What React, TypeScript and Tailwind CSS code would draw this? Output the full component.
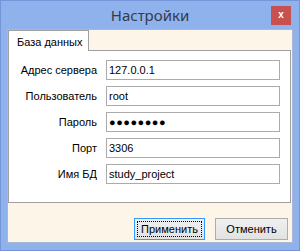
import React from 'react';

// Windows 8 style settings dialog
const fields = [
  { label: 'Адрес сервера', value: '127.0.0.1' },
  { label: 'Пользователь', value: 'root' },
  { label: 'Пароль', value: '●●●●●●●●', secret: true },
  { label: 'Порт', value: '3306' },
  { label: 'Имя БД', value: 'study_project' },
];

const App = () => {
  return (
    <div className="w-[300px] h-[251px] bg-[#8fb2ec] border border-[#7496d8] flex flex-col" style={{ fontFamily: '"Liberation Sans", Arial, sans-serif' }}>
      {/* Title bar */}
      <div className="h-[28px] grid grid-cols-[1fr_auto_1fr] items-start">
        <div></div>
        <div className="pt-[3px] text-[15px] text-[#333b4d]" style={{ fontFamily: '"Noto Sans", "Open Sans", sans-serif' }}>
          Настройки
        </div>
        <div className="flex justify-end pt-[5px] pr-[8px]">
          <div className="w-[20px] h-[19px] bg-[#c75050] flex items-center justify-center text-white text-[10px] font-bold leading-none pb-px">
            x
          </div>
        </div>
      </div>

      {/* Client area */}
      <div className="mx-[6px] h-[214px] bg-[#fcf5e8] border border-[#a9b8d6] flex flex-col text-[11px] text-black">
        <div className="mr-[1px] flex flex-col">
          {/* Tab strip */}
          <div className="flex h-[21px] items-end">
            <div className="w-[81px] h-[21px] bg-white border border-b-0 border-[#a0a0a0] pl-[8px] pt-[3px] relative z-10">
              База данных
            </div>
          </div>
          {/* Tab panel */}
          <div className="h-[153px] bg-white border border-[#a0a0a0] -mt-px pt-[9px] flex flex-col gap-[6px]">
            {fields.map((f) => (
              <div key={f.label} className="flex items-center h-[20px]">
                <div className="w-[89px] text-right pr-[1px]">{f.label}</div>
                <div className="ml-[8px] w-[174px] h-[20px] border border-[#ababab] flex items-center pl-[2px]">
                  {f.secret ? (
                    <span className="text-[11px] tracking-[0.5px]">{f.value}</span>
                  ) : (
                    f.value
                  )}
                </div>
              </div>
            ))}
          </div>
        </div>

        {/* Buttons */}
        <div className="flex justify-end gap-[10px] pr-[4px] mt-[15px]">
          <div className="w-[71px] h-[22px] border border-[#3399ff] bg-gradient-to-b from-[#f0f0f0] to-[#e2e2e2] p-[2px]">
            <div className="w-full h-full border border-dotted border-black flex items-center justify-center">
              Применить
            </div>
          </div>
          <div className="w-[73px] h-[22px] border border-[#acacac] bg-gradient-to-b from-[#f0f0f0] to-[#e2e2e2] flex items-center justify-center">
            Отменить
          </div>
        </div>
      </div>
    </div>
  );
};

export default App;
